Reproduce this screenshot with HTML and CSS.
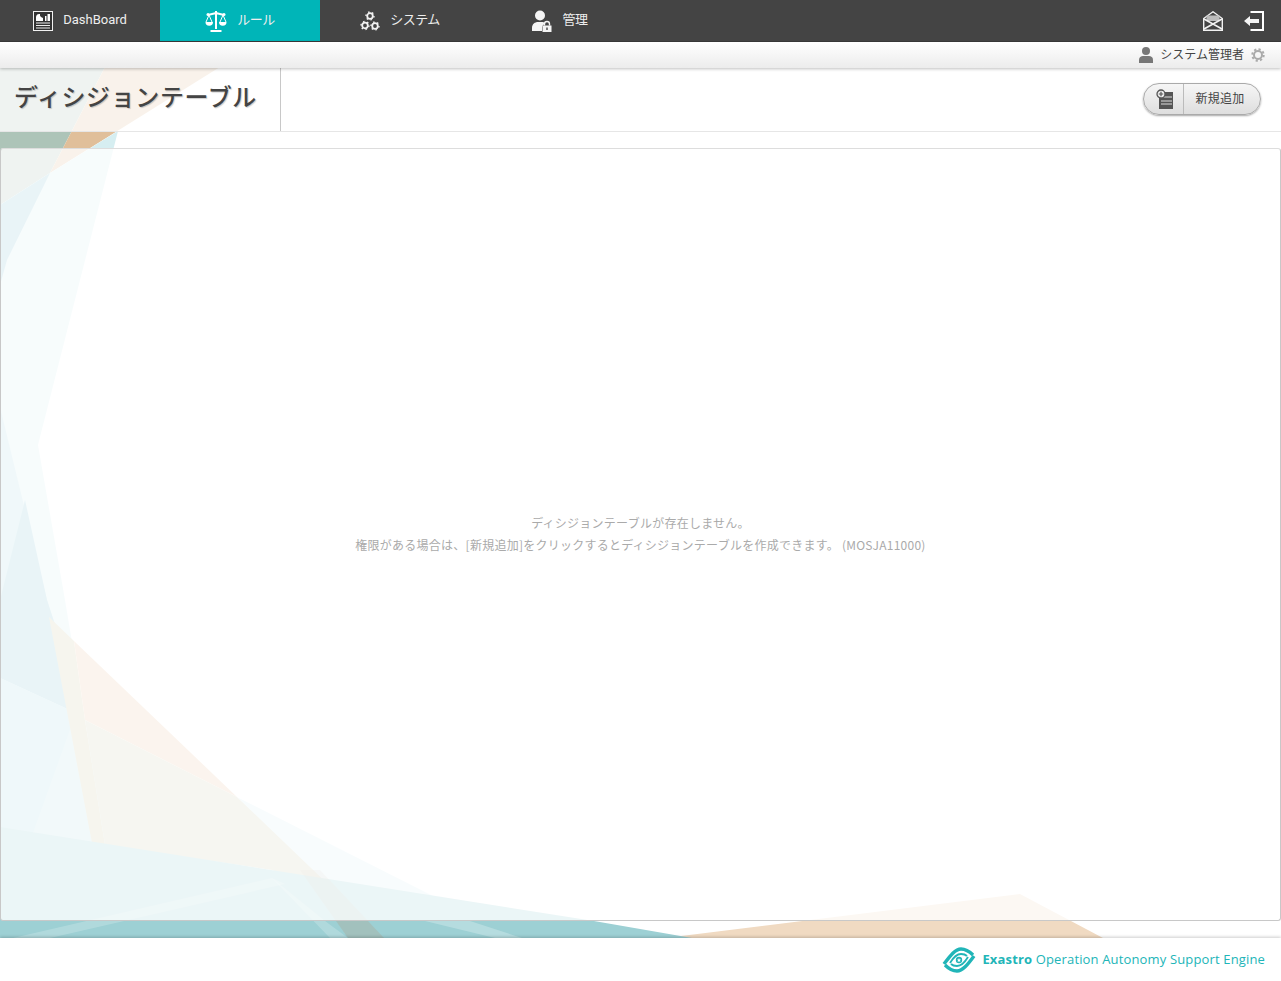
FILE: index.html
```html
<!DOCTYPE html>
<html lang="ja">

<head>
  <meta charset="UTF-8">
  <title>ディシジョンテーブル</title>
  <link rel="stylesheet" href="styles.css">
</head>

<body>
  <!-- background shards -->
  <svg class="bg-art" width="1281" height="981" viewBox="0 0 1281 981">
    <polygon points="0,42 118,42 50,173 0,205" fill="#adc4b8" />
    <polygon points="118,42 260,42 50,173" fill="#e0bf9a" />
    <polygon points="118,131 38,445 65,600 85,720 105,830 125,938 0,938 0,205 50,173" fill="#d6eef1" />
    <polygon points="0,205 50,173 7,260 0,285" fill="#91c8d7" />
    <polygon points="0,407 47,600 60,640 76,713 0,678" fill="#b5dde5" />
    <polygon points="25,500 47,600 60,640 76,713 0,678 0,600" fill="#91c8d7" />
    <polygon points="0,678 76,713 105,845 0,827" fill="#bfe2e6" />
    <polygon points="0,678 76,713 9,900 0,938" fill="#afdce6" />
    <polygon points="49,617 74,641 85,720 105,845 92,843" fill="#d2cdaa" />
    <polygon points="74,641 85,720 237,797" fill="#ebc8aa" />
    <polygon points="85,720 237,797 320,870 346,903 272,870 105,845" fill="#d2d2b9" />
    <polygon points="237,797 435,897 522,938 384,938" fill="#dcf0f5" />
    <polygon points="665,938 1020,894 1103,938" fill="#f0dac2" />
    <polygon points="0,827 594,921 692,938 0,938" fill="#9dd0d4" />
    <polygon points="13,938 272,878 285,884 50,938" fill="#fff" fill-opacity="0.2" />
    <polygon points="272,878 325,921 348,938 330,938" fill="#fff" fill-opacity="0.2" />
    <polygon points="300,870 320,870 384,938 348,938" fill="#b09f88" fill-opacity="0.3" />
    <polygon points="425,921 470,921 522,938 495,938" fill="#fff" fill-opacity="0.25" />
  </svg>

  <header class="topbar">
    <nav class="menu">
      <a class="menu-item" href="#">
        <svg class="ico" width="20" height="20" viewBox="0 0 20 20">
          <rect x="0.5" y="0.5" width="19" height="19" fill="#333" stroke="#f2f2f2" />
          <path d="M3 10V6a3.5 3.5 0 0 1 4-3 3 3 0 0 0 1 3l2 1v3z" fill="#fff" />
          <path d="M12 10V5h1.500v5zM14.500 10V3H17v7z" fill="#fff" />
          <path d="M3 12h14M3 14.500h14M3 17h14" stroke="#eee" stroke-width="1.200" />
        </svg>
        <span class="menu-label">DashBoard</span>
      </a>
      <a class="menu-item active" href="#">
        <svg class="ico" width="22" height="22" viewBox="0 0 22 22">
          <path d="M11 1v18M3 5l8-2 8 2" fill="none" stroke="#fff" stroke-width="2" />
          <circle cx="3" cy="4.500" r="1.500" fill="#fff" />
          <circle cx="19" cy="4.500" r="1.500" fill="#fff" />
          <path d="M5.500 20h11v2h-11z" fill="#fff" />
          <path d="M4 5L1 12M4 5l3 7M18 5l-3 7M18 5l3 7" fill="none" stroke="#fff" />
          <path d="M0.500 12h7.500a3.700 3.700 0 0 1-7.500 0zM14 12h7.500a3.700 3.700 0 0 1-7.500 0z" fill="#fff" />
        </svg>
        <span class="menu-label jp">ルール</span>
      </a>
      <a class="menu-item" href="#">
        <svg class="ico" width="20" height="20" viewBox="0 0 20 20">
          <g fill="none" stroke="#f2f2f2">
            <circle cx="10" cy="5" r="2.800" stroke-width="1.800" />
            <circle cx="5" cy="14.500" r="2.800" stroke-width="1.800" />
            <circle cx="15" cy="15" r="2.800" stroke-width="1.800" />
            <circle cx="10" cy="5" r="4" stroke-width="1.400" stroke-dasharray="1.500 2.600" />
            <circle cx="5" cy="14.500" r="4" stroke-width="1.400" stroke-dasharray="1.500 2.600" />
            <circle cx="15" cy="15" r="4" stroke-width="1.400" stroke-dasharray="1.500 2.600" />
          </g>
        </svg>
        <span class="menu-label jp">システム</span>
      </a>
      <a class="menu-item" href="#">
        <svg class="ico" width="20" height="22" viewBox="0 0 20 22">
          <circle cx="8" cy="5.500" r="5" fill="#f5f5f5" />
          <path d="M0 21v-3c0-4 3-6 6-6h4c1 0 2 0 3 1v1a4 4 0 0 0-3 3v4z" fill="#f5f5f5" />
          <rect x="10.500" y="15.500" width="9" height="6.500" fill="#f5f5f5" />
          <path d="M12.500 15.500v-1.500a2.500 2.500 0 0 1 5 0v1.500" fill="none" stroke="#f5f5f5" stroke-width="1.400" />
          <rect x="14.300" y="17.500" width="1.400" height="2.500" fill="#444" />
        </svg>
        <span class="menu-label jp">管理</span>
      </a>
    </nav>
    <div class="top-actions">
      <svg width="20" height="20" viewBox="0 0 20 20">
        <path d="M0.700 7.500L10 0.800l9.300 6.700v11.800H0.700z" fill="#444" stroke="#f2f2f2" stroke-width="1.400" />
        <rect x="3.500" y="4.500" width="13" height="5.500" fill="#bbb" />
        <path d="M1 8l18 10M19 8L1 18" stroke="#f2f2f2" stroke-width="1.600" />
      </svg>
      <svg width="20" height="20" viewBox="0 0 20 20">
        <path d="M6.500 1H19v18H6.500" fill="none" stroke="#fff" stroke-width="2" />
        <path d="M0 10l6-5v3h9v4H6v3z" fill="#f5f5f5" />
      </svg>
    </div>
  </header>

  <div class="userbar">
    <svg width="14" height="16" viewBox="0 0 14 16">
      <circle cx="7" cy="4" r="4" fill="#777" />
      <path d="M0 16v-3c0-3 2-4 4-4h6c2 0 4 1 4 4v3z" fill="#777" />
    </svg>
    <span class="user-name">システム管理者</span>
    <svg width="14" height="14" viewBox="0 0 14 14">
      <circle cx="7" cy="7" r="4" fill="none" stroke="#aaa" stroke-width="2" />
      <circle cx="7" cy="7" r="5.700" fill="none" stroke="#aaa" stroke-width="2" stroke-dasharray="2.200 2.250" />
    </svg>
  </div>

  <section class="title-row">
    <h1 class="page-title">ディシジョンテーブル</h1>
    <button class="add-btn" type="button">
      <span class="add-btn-icon">
        <svg width="18" height="20" viewBox="0 0 18 20">
          <rect x="3" y="3" width="14" height="17" fill="#555" />
          <path d="M8 8h8M5 12h11M5 15h11" stroke="#ddd" stroke-width="1.200" />
          <circle cx="5" cy="5" r="4" fill="#eee" stroke="#555" stroke-width="1.300" />
          <path d="M5 2.800v4.400M2.800 5h4.400" stroke="#555" stroke-width="1.200" />
        </svg>
      </span>
      <span class="add-btn-text">新規追加</span>
    </button>
  </section>

  <main class="content">
    <div class="panel">
      <p class="empty-msg">ディシジョンテーブルが存在しません。<br>権限がある場合は、[新規追加]をクリックするとディシジョンテーブルを作成できます。 (MOSJA11000)</p>
    </div>
  </main>

  <footer class="footer">
    <svg width="34" height="26" viewBox="0 0 34 26">
      <path d="M2 17C8 9 13 2 19 2c5 0 9 3 12 6" fill="none" stroke="#21b5b8" stroke-width="3.400" />
      <path d="M32 9c-6 8-11 15-17 15-5 0-9-3-12-6" fill="none" stroke="#21b5b8" stroke-width="3.400" />
      <path d="M8 16c3-5 6-9 11-9 2 0 5 1 6 2M26 10c-3 5-6 9-11 9-2 0-5-1-6-2" fill="none" stroke="#21b5b8" stroke-width="1.800" />
      <circle cx="17" cy="13" r="3.200" fill="#21b5b8" />
      <polygon points="17,11 17.700,12.400 19,12.600 18,13.600 18.300,15 17,14.300 15.700,15 16,13.600 15,12.600 16.300,12.400" fill="#fff" />
    </svg>
    <p class="footer-text"><b>Exastro</b> Operation Autonomy Support Engine</p>
  </footer>
</body>

</html>
```

FILE: styles.css
```css
* {
  box-sizing: border-box;
}

body {
  margin: 0;
  height: 100vh;
  display: flex;
  flex-direction: column;
  position: relative;
  overflow: hidden;
  background-color: #fff;
  font-family: "Noto Sans CJK JP", Roboto, sans-serif;
  font-size: 12px;
  color: #444;
}

.bg-art {
  position: absolute;
  top: 0;
  left: 0;
}

.topbar {
  position: relative;
  height: 42px;
  flex: none;
  display: flex;
  justify-content: space-between;
  background-color: #444;
  border-bottom: 1px solid #3a3a3a;
}

.menu {
  display: flex;
}

.menu-item {
  width: 160px;
  display: flex;
  align-items: center;
  justify-content: center;
  gap: 10px;
  color: #eee;
  text-decoration: none;
  font-family: Roboto, "Noto Sans CJK JP", sans-serif;
  font-size: 13px;
}

.menu-label {
  padding-bottom: 2px;
}

.jp {
  padding-bottom: 4px;
  letter-spacing: -0.5px;
}

.active {
  background-color: #00b5b8;
}

.top-actions {
  display: flex;
  align-items: center;
  gap: 21px;
  padding-right: 17px;
}

.userbar {
  position: relative;
  height: 26px;
  flex: none;
  display: flex;
  align-items: center;
  justify-content: flex-end;
  gap: 7px;
  padding-right: 16px;
  background: linear-gradient(#fff, #ececec);
  box-shadow: 0 1px 3px rgba(0, 0, 0, 0.25);
  z-index: 2;
}

.user-name {
  padding-bottom: 4px;
  font-size: 12px;
  color: #444;
}

.title-row {
  position: relative;
  height: 64px;
  flex: none;
  display: flex;
  align-items: center;
  justify-content: space-between;
  padding: 0 20px 2px 0;
  background-color: rgba(255, 255, 255, 0.8);
  border-bottom: 1px solid #e6e6e6;
}

.page-title {
  width: 281px;
  height: 64px;
  margin: 0;
  padding: 10px 0 0 14px;
  border-right: 1px solid #c8c8c8;
  font-size: 24px;
  font-weight: 500;
  line-height: 38px;
  letter-spacing: 0.6px;
  color: #444;
  text-shadow: 1px 1px 1px rgba(0, 0, 0, 0.2);
}

.add-btn {
  display: flex;
  width: 118px;
  height: 32px;
  padding: 0;
  border: 1px solid #aaa;
  border-radius: 16px;
  background: linear-gradient(#f6f6f6, #dedede);
  box-shadow: 0 1px 2px rgba(0, 0, 0, 0.35);
  font-family: inherit;
}

.add-btn-icon {
  width: 40px;
  height: 100%;
  display: flex;
  align-items: center;
  justify-content: center;
  border-right: 1px solid #bbb;
  padding-left: 3px;
}

.add-btn-text {
  flex: 1;
  padding-right: 4px;
  font-size: 12px;
  line-height: 27px;
  letter-spacing: 0.2px;
  color: #444;
  text-align: center;
}

.content {
  position: relative;
  flex: 1;
  display: flex;
  padding: 16px 0 17px;
}

.panel {
  flex: 1;
  display: flex;
  align-items: center;
  justify-content: center;
  background-color: rgba(255, 255, 255, 0.8);
  border: 1px solid #c8c8c8;
  border-top-color: #ddd;
  border-radius: 3px;
}

.empty-msg {
  margin: 0 0 2px;
  font-size: 12px;
  line-height: 22px;
  letter-spacing: 0.25px;
  color: #aaa;
  text-align: center;
}

.footer {
  position: relative;
  height: 43px;
  flex: none;
  display: flex;
  align-items: center;
  justify-content: flex-end;
  gap: 6px;
  padding-right: 16px;
  background-color: #fff;
  box-shadow: 0 -1px 3px rgba(0, 0, 0, 0.2);
}

.footer-text {
  margin: 0 0 2px;
  font-family: "Open Sans", sans-serif;
  font-size: 13px;
  letter-spacing: 0.15px;
  color: #21b5b8;
}
```
